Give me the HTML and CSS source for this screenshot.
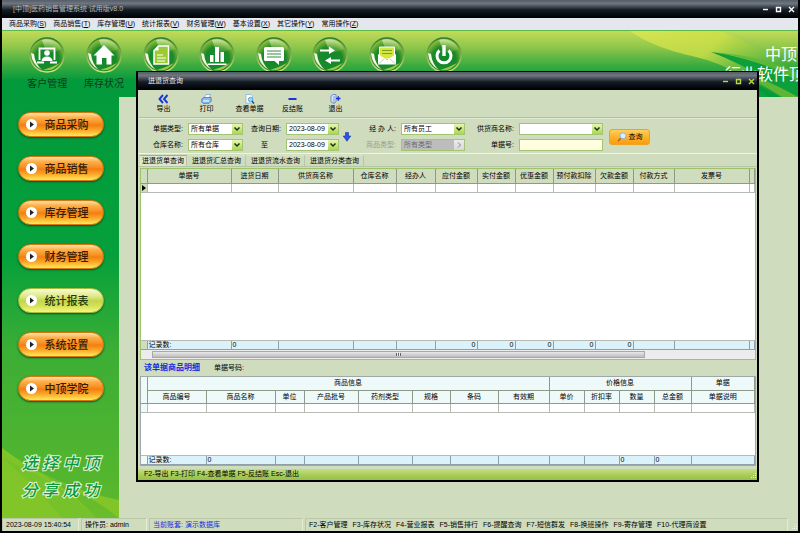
FILE: index.html
```
<!DOCTYPE html>
<html lang="zh-CN">
<head>
    <meta charset="UTF-8">
    <meta name="viewport" content="width=device-width, initial-scale=1.0">
    <title>[中顶]医药销售管理系统 试用版v8.0</title>
    <link rel="stylesheet" href="styles.css">
</head>
<body>

<!-- Shared icon parts -->
<svg class="defs" width="0" height="0" aria-hidden="true">
    <defs>
        <radialGradient id="orbFill" cx="50%" cy="62%" r="60%">
            <stop offset="0" stop-color="#0f8a2c"/>
            <stop offset="0.6" stop-color="#1c8a2a"/>
            <stop offset="1" stop-color="#9cc63a"/>
        </radialGradient>
        <linearGradient id="orbRim" x1="0" y1="0" x2="0" y2="1">
            <stop offset="0" stop-color="#2c7a35"/>
            <stop offset="1" stop-color="#d6e07a"/>
        </linearGradient>
        <linearGradient id="orbShine" x1="0" y1="0" x2="0" y2="1">
            <stop offset="0" stop-color="#f4f8dc"/>
            <stop offset="1" stop-color="#b6d83a" stop-opacity="0.3"/>
        </linearGradient>
        <linearGradient id="ray" x1="0" y1="0" x2="1" y2="0.4">
            <stop offset="0" stop-color="#dfe850" stop-opacity="0.7"/>
            <stop offset="0.5" stop-color="#cfe048" stop-opacity="0.8"/>
            <stop offset="1" stop-color="#4fb23a" stop-opacity="0.3"/>
        </linearGradient>
        <symbol id="orb" viewBox="0 0 36 36">
            <circle cx="18" cy="18" r="17" fill="url(#orbFill)" stroke="url(#orbRim)" stroke-width="1.4"/>
            <path d="M13 3 A15.500 15.500 0 0 1 32 12 Q24 17 17 14 Z" fill="url(#orbShine)" opacity="0.65"/>
            <path d="M2 16 Q3 28 13 33 Q6 27 5 17 Z" fill="#f2f7e6"/>
            <path d="M14 33 Q24 35 31 26 Q24 30 14 33 Z" fill="#b9d84a" opacity="0.8"/>
        </symbol>
    </defs>
</svg>

<div class="app">
    <header class="titlebar">
        <h1>[中顶]医药销售管理系统 试用版v8.0</h1>
        <div class="win-controls">
            <button type="button" aria-label="最小化"><svg viewBox="0 0 7 7"><path d="M1 3.500H6"/></svg></button>
            <button type="button" aria-label="最大化"><svg viewBox="0 0 7 7"><path d="M1.500 1.500H5.500V5.500H1.500Z"/></svg></button>
            <button type="button" aria-label="关闭"><svg viewBox="0 0 7 7"><path d="M1 1L6 6M6 1L1 6"/></svg></button>
        </div>
    </header>

    <nav class="menubar">
        <a href="#">商品采购(<u>S</u>)</a>
        <a href="#">商品销售(<u>T</u>)</a>
        <a href="#">库存管理(<u>U</u>)</a>
        <a href="#">统计报表(<u>V</u>)</a>
        <a href="#">财务管理(<u>W</u>)</a>
        <a href="#">基本设置(<u>X</u>)</a>
        <a href="#">其它操作(<u>Y</u>)</a>
        <a href="#">常用操作(<u>Z</u>)</a>
    </nav>

    <div class="banner">
        <svg class="swoosh" viewBox="0 0 168 66" preserveAspectRatio="none" aria-hidden="true">
            <path d="M0 0Q22 16 62 25Q90 31 118 48L150 66H168V44Q140 20 90 0Z" fill="url(#ray)"/>
            <path d="M81 21Q110 24 168 46V66H158Q130 40 81 21Z" fill="#0d9f3a"/>
            <path d="M81 21Q125 26 168 50V42Q130 24 81 21Z" fill="#5cb83a" opacity="0.8"/>
            <path d="M96 38Q130 44 168 66H152Q125 48 96 38Z" fill="#5fb636"/>
            <path d="M104 46Q126 54 138 66H100Z" fill="#0d9f3a"/>
        </svg>
        <div class="launchers">
            <button type="button" class="launcher">
                <svg viewBox="0 0 36 36"><use href="#orb"/><path d="M10.500 23V11.500H25.500V23M8 25.500H15M21 25.500H28" fill="none" stroke="#fff" stroke-width="1.800"/><circle cx="18" cy="16" r="2.800" fill="#fff"/><path d="M12.500 24Q13 19.500 18 19.500T23.500 24Z" fill="#fff"/></svg>
                <span>客户管理</span>
            </button>
            <button type="button" class="launcher">
                <svg viewBox="0 0 36 36"><use href="#orb"/><path d="M18 8L28.500 18.500H25.500V27.500H20.500V21H16V27.500H10.500V18.500H7.500Z" fill="#fff"/></svg>
                <span>库存状况</span>
            </button>
            <button type="button" class="launcher" aria-label="统计">
                <svg viewBox="0 0 36 36"><use href="#orb"/><path d="M15.500 9H25.500V27H11V13.500Z" fill="#9ccb34" stroke="#fff" stroke-width="1.500"/><path d="M11 13.500H15.500V9" fill="#fff"/><path d="M14 18H20M14 21H23M14 24H22" stroke="#fff" stroke-width="1.200"/></svg>
            </button>
            <button type="button" class="launcher" aria-label="报表">
                <svg viewBox="0 0 36 36"><use href="#orb"/><path d="M11 18H14.500V25H11ZM16 10H20V25H16ZM21.500 15H25V25H21.500ZM8.500 26.500H27.500V28H8.500Z" fill="#fff"/></svg>
            </button>
            <button type="button" class="launcher" aria-label="短信">
                <svg viewBox="0 0 36 36"><use href="#orb"/><path d="M9.500 10H26.500Q28 10 28 11.500V22.500Q28 24 26.500 24H23V28L18.500 24H9.500Q8 24 8 22.500V11.500Q8 10 9.500 10Z" fill="#fff"/><path d="M11 14H25M11 17H25M11 20H25" stroke="#2f8f3c" stroke-width="1.200"/></svg>
            </button>
            <button type="button" class="launcher" aria-label="换班">
                <svg viewBox="0 0 36 36"><use href="#orb"/><path d="M8 12.500H17V9.500L23 13.500L17 17V14.500H8ZM28 22.500H19V20L13 23.500L19 27V24.500H28Z" fill="#fff"/></svg>
            </button>
            <button type="button" class="launcher" aria-label="邮件">
                <svg viewBox="0 0 36 36"><use href="#orb"/><path d="M10.500 10H25.500V22H10.500Z" fill="#d8e53a" stroke="#fff"/><path d="M13 13.500H23M13 16.500H23" stroke="#6ba52e"/><path d="M9 17L18 23L27 17V27.500H9Z" fill="#fff"/><path d="M9 27.500L15.500 21.500M27 27.500L20.500 21.500" stroke="#a9c9a0" stroke-width="0.800"/></svg>
            </button>
            <button type="button" class="launcher" aria-label="退出">
                <svg viewBox="0 0 36 36"><use href="#orb"/><path d="M13.500 13.500A7 7 0 1 0 22.500 13.500" fill="none" stroke="#fff" stroke-width="3"/><path d="M18 8V19" stroke="#fff" stroke-width="3.400"/></svg>
            </button>
        </div>
        <p class="brand"><span>中顶</span><span>行业软件顶</span></p>
    </div>

    <main class="workspace">
        <aside class="sidebar">
            <button type="button" class="pill">商品采购</button>
            <button type="button" class="pill">商品销售</button>
            <button type="button" class="pill">库存管理</button>
            <button type="button" class="pill">财务管理</button>
            <button type="button" class="pill active">统计报表</button>
            <button type="button" class="pill">系统设置</button>
            <button type="button" class="pill">中顶学院</button>
            <p class="slogan">选 择 中 顶<br>分 享 成 功</p>
        </aside>
    </main>

    <footer class="statusbar">
        <span class="cell clock">2023-08-09 15:40:54</span>
        <span class="cell operator">操作员: admin</span>
        <span class="cell account">当前账套: 演示数据库</span>
        <span class="cell keys">
            <span>F2-客户管理</span><span>F3-库存状况</span><span>F4-营业报表</span><span>F5-销售排行</span><span>F6-提醒查询</span><span>F7-短信群发</span><span>F8-换班操作</span><span>F9-寄存管理</span><span>F10-代理商设置</span>
        </span>
        <svg class="grip" viewBox="0 0 8 8"><path d="M6 1h1v1h-1zM4 3h1v1h-1zM6 3h1v1h-1zM2 5h1v1h-1zM4 5h1v1h-1zM6 5h1v1h-1z"/></svg>
    </footer>

    <!-- 进退货查询 window -->
    <section class="dialog">
        <header class="titlebar">
            <h2>进退货查询</h2>
            <div class="win-controls">
                <button type="button" aria-label="最小化"><svg viewBox="0 0 7 7"><path d="M1 3.500H6"/></svg></button>
                <button type="button" aria-label="最大化"><svg viewBox="0 0 7 7"><path d="M1.500 1.500H5.500V5.500H1.500Z"/></svg></button>
                <button type="button" aria-label="关闭"><svg viewBox="0 0 7 7"><path d="M1 1L6 6M6 1L1 6"/></svg></button>
            </div>
        </header>

        <div class="toolbar">
            <button type="button">
                <svg viewBox="0 0 11 10"><path d="M5 1L1.500 5L5 9M9.500 1L6 5L9.500 9" fill="none" stroke="#1b35d8" stroke-width="1.900"/></svg>
                导出
            </button>
            <button type="button">
                <svg viewBox="0 0 11 10"><path d="M3 4L5 0.500H9.500L8 4.500Z" fill="#fff" stroke="#5b8fd0" stroke-width="0.600"/><path d="M0.800 5L3 3.500H10L10.300 7L8 9.300H2L0.800 8Z" fill="#8dbdf0" stroke="#2f64b8" stroke-width="0.700"/><path d="M2 7H8" stroke="#fff"/></svg>
                打印
            </button>
            <button type="button">
                <svg viewBox="0 0 11 10"><path d="M2 0.500H7L8.500 2V9H2Z" fill="#fff" stroke="#7aa9d8" stroke-width="0.700"/><circle cx="6.500" cy="5.500" r="2.200" fill="#8fe0f0" stroke="#3b87c0" stroke-width="0.700"/><path d="M8 7.200L10 9.500" stroke="#1f3f90" stroke-width="1.300"/></svg>
                查看单据
            </button>
            <button type="button">
                <svg viewBox="0 0 11 10"><path d="M1.500 4H9.500V6H1.500Z" fill="#1b35d8"/></svg>
                反结账
            </button>
            <button type="button">
                <svg viewBox="0 0 11 10"><path d="M1 2L3 0.500H6V8L4 9.500L1 8Z" fill="#d5e4fa" stroke="#5c80c4" stroke-width="0.800"/><path d="M4 2V9" stroke="#5c80c4" stroke-width="0.700"/><path d="M6 4.500H10.500M8.300 2.300V6.700" stroke="#1b35d8" stroke-width="1.500"/></svg>
                退出
            </button>
        </div>

        <form class="filters">
            <label for="billType">单据类型:</label>
            <select id="billType"><option>所有单据</option></select>
            <label for="dateFrom">查询日期:</label>
            <select id="dateFrom"><option>2023-08-09</option></select>
            <svg class="down" viewBox="0 0 8 10"><path d="M2.500 0.500H5.500V4H7.800L4 9.300L0.200 4H2.500Z" fill="#2a55e0" stroke="#1633a0" stroke-width="0.600"/></svg>
            <label for="handler">经 办 人:</label>
            <select id="handler"><option>所有员工</option></select>
            <label for="supplier">供货商名称:</label>
            <select id="supplier"><option></option></select>
            <button type="button" class="search">
                <svg viewBox="0 0 10 10"><path d="M4 6L1 9.300" stroke="#b5651d" stroke-width="1.600"/><circle cx="6" cy="3.800" r="3" fill="#d6f1ff" stroke="#7db4dc" stroke-width="0.900"/></svg>
                查询
            </button>
            <label for="store">仓库名称:</label>
            <select id="store"><option>所有仓库</option></select>
            <label for="dateTo" class="to">至</label>
            <select id="dateTo"><option>2023-08-09</option></select>
            <label for="goodsType" class="off">商品类型:</label>
            <select id="goodsType" disabled><option>所有类型</option></select>
            <label for="billNo">单据号:</label>
            <input type="text" id="billNo">
        </form>

        <div class="tabs">
            <button type="button" class="active">进退货单查询</button>
            <button type="button">进退货汇总查询</button>
            <button type="button">进退货流水查询</button>
            <button type="button">进退货分类查询</button>
        </div>

        <div class="panel">
            <div class="grid-box bills">
                <table>
                    <colgroup>
                        <col class="mark"><col class="b-no"><col class="b-date"><col class="b-supplier"><col class="b-store"><col class="b-person"><col class="b-due"><col class="b-money"><col class="b-money"><col class="b-due"><col class="b-money"><col class="b-pay"><col class="b-invoice"><col>
                    </colgroup>
                    <thead>
                        <tr><th></th><th>单据号</th><th>进货日期</th><th>供货商名称</th><th>仓库名称</th><th>经办人</th><th>应付金额</th><th>实付金额</th><th>优惠金额</th><th>预付款扣除</th><th>欠款金额</th><th>付款方式</th><th>发票号</th><th></th></tr>
                    </thead>
                    <tbody>
                        <tr class="line"><th><span class="pointer"></span></th><td></td><td></td><td></td><td></td><td></td><td></td><td></td><td></td><td></td><td></td><td></td><td></td><td></td></tr>
                        <tr class="blank"><td colspan="14"></td></tr>
                    </tbody>
                    <tfoot>
                        <tr><th></th><td>记录数:</td><td>0</td><td></td><td></td><td></td><td class="num">0</td><td class="num">0</td><td class="num">0</td><td class="num">0</td><td class="num">0</td><td></td><td></td><td></td></tr>
                    </tfoot>
                </table>
                <div class="scroll"><div class="thumb"></div></div>
            </div>

            <p class="caption"><strong>该单据商品明细</strong><span>单据号码:</span></p>

            <div class="grid-box detail">
                <table>
                    <colgroup>
                        <col class="mark"><col class="d-code"><col class="d-name"><col class="d-unit"><col class="d-batch"><col class="d-batch"><col class="d-spec"><col class="d-bar"><col class="d-expiry"><col class="d-price"><col class="d-price"><col class="d-price"><col class="d-total"><col>
                    </colgroup>
                    <thead>
                        <tr><th rowspan="2"></th><th colspan="8">商品信息</th><th colspan="4">价格信息</th><th>单据</th></tr>
                        <tr><th>商品编号</th><th>商品名称</th><th>单位</th><th>产品批号</th><th>药剂类型</th><th>规格</th><th>条码</th><th>有效期</th><th>单价</th><th>折扣率</th><th>数量</th><th>总金额</th><th>单据说明</th></tr>
                    </thead>
                    <tbody>
                        <tr class="line"><th></th><td></td><td></td><td></td><td></td><td></td><td></td><td></td><td></td><td></td><td></td><td></td><td></td><td></td></tr>
                        <tr class="blank"><td colspan="14"></td></tr>
                    </tbody>
                    <tfoot>
                        <tr><th></th><td>记录数:</td><td>0</td><td></td><td></td><td></td><td></td><td></td><td></td><td></td><td></td><td>0</td><td>0</td><td></td></tr>
                    </tfoot>
                </table>
            </div>
        </div>

        <footer class="hints">
            <span>F2-导出</span><span>F3-打印</span><span>F4-查看单据</span><span>F5-反结账</span><span>Esc-退出</span>
            <svg class="grip" viewBox="0 0 8 8"><path d="M6 1h1v1h-1zM4 3h1v1h-1zM6 3h1v1h-1zM2 5h1v1h-1zM4 5h1v1h-1zM6 5h1v1h-1z"/></svg>
        </footer>
    </section>
</div>

</body>
</html>
```

FILE: styles.css
```
* {
    box-sizing: border-box;
}
body {
    margin: 0;
    font-family: "Liberation Sans", "Noto Sans CJK SC", sans-serif;
    font-size: 7px;
    line-height: 10px;
    color: #000;
    background-color: #000;
}
button, select, input {
    font: inherit;
    color: inherit;
    margin: 0;
    padding: 0;
    border: none;
    background: none;
}
h1, h2, p {
    margin: 0;
    font-size: 7px;
    font-weight: normal;
}
a {
    color: inherit;
    text-decoration: none;
}
.defs {
    position: absolute;
}

/* Main window */
.app {
    position: relative;
    display: flex;
    flex-direction: column;
    height: 100vh;
    min-height: 500px;
    padding: 0 2px 2px;
    overflow: hidden;
    background-color: #000;
}
.titlebar {
    display: flex;
    flex: none;
    align-items: center;
    justify-content: space-between;
    height: 18px;
    padding: 0 3px 0 11px;
    color: #b4b8bc;
    background: linear-gradient(#555d68 0, #70767f 20%, #30363e 45%, #131c26 55%, #05080b 85%, #000);
}
.win-controls {
    display: flex;
    gap: 6px;
    color: #fff;
}
.win-controls button {
    width: 7px;
    height: 7px;
}
.win-controls svg {
    display: block;
    fill: none;
    stroke: currentColor;
    stroke-width: 1.4;
}
.menubar {
    display: flex;
    flex: none;
    gap: 7px;
    height: 13px;
    padding: 1px 7px;
    background-color: #e4e8ee;
    border-bottom: 1px solid #5cba4a;
}

/* Green banner */
.banner {
    position: relative;
    display: flex;
    flex: none;
    justify-content: space-between;
    height: 66px;
    overflow: hidden;
    background: linear-gradient(#c2db58, #8ec64a 25%, #3cab40 52%, #039a3b 75%);
}
.swoosh {
    position: absolute;
    top: 0;
    right: 0;
    width: 168px;
    height: 100%;
}
.launchers {
    display: flex;
    width: 470px;
    padding: 6px 0 0 17px;
}
.launcher {
    display: flex;
    flex: 1;
    flex-direction: column;
    align-items: center;
    gap: 5px;
    font-size: 10px;
    line-height: 12px;
    color: #0c3a18;
}
.launcher svg {
    width: 36px;
    height: 36px;
}
.brand {
    position: relative;
    display: flex;
    flex-direction: column;
    width: 73px;
    padding-top: 14px;
    font-size: 16px;
    line-height: 20px;
    white-space: nowrap;
    color: #fff;
}
.brand span:first-child {
    padding-left: 40px;
}

/* Sidebar */
.workspace {
    display: flex;
    flex: 1;
    min-height: 0;
    background-color: #cfdcbd;
}
.sidebar {
    display: flex;
    flex-direction: column;
    align-items: center;
    gap: 19px;
    width: 117px;
    padding-top: 15px;
    overflow: hidden;
    background:
        url("data:image/svg+xml,%3Csvg xmlns='http://www.w3.org/2000/svg' viewBox='0 0 117 70' preserveAspectRatio='none'%3E%3Cpath d='M0 0Q50 38 117 52V70H0Z' fill='%238fca28' fill-opacity='0.75'/%3E%3Cpath d='M0 10Q60 36 95 70H60Q30 34 0 10Z' fill='%2370c02c' fill-opacity='0.7'/%3E%3Cpath d='M40 26Q90 48 117 70H95Q70 44 40 26Z' fill='%2359b52e' fill-opacity='0.6'/%3E%3C/svg%3E") bottom / 100% 70px no-repeat,
        linear-gradient(#039a3b, #05a03b 38%, #3bae35 60%, #5cb82c);
}
.pill {
    display: flex;
    flex: none;
    align-items: center;
    gap: 8px;
    width: 86px;
    height: 25px;
    padding-left: 7px;
    font-size: 11px;
    font-weight: 500;
    color: #3a1c02;
    border-radius: 13px;
    border: 1px solid #d9760c;
    background: linear-gradient(#ffe3a8, #fdb04a 20%, #f68a1c 48%, #f57c10 52%, #fba928 75%, #ffe95a);
    box-shadow: 0 1px 2px #06501c;
}
.pill.active {
    color: #24360a;
    border-color: #a9bd3a;
    background: linear-gradient(#f8fbd6, #e0ea8c 30%, #c3d64c 52%, #d6e25a 75%, #f6f77c);
}
.pill::before {
    content: "";
    width: 11px;
    height: 11px;
    border-radius: 50%;
    background: #fff url("data:image/svg+xml,%3Csvg xmlns='http://www.w3.org/2000/svg' viewBox='0 0 11 11'%3E%3Cpath d='M4 2.500L8 5.500L4 8.500Z' fill='%23222'/%3E%3C/svg%3E") center / 11px 11px;
}
.slogan {
    margin-top: 30px;
    font-size: 16px;
    font-style: italic;
    font-weight: 500;
    line-height: 27px;
    white-space: nowrap;
    color: #0a9a3c;
    -webkit-text-stroke: 2px #e6f5d8;
    paint-order: stroke fill;
}

/* Status bar */
.statusbar {
    display: flex;
    flex: none;
    gap: 2px;
    height: 13px;
    white-space: nowrap;
    background-color: #cfdcbd;
}
.statusbar .cell {
    padding: 1px 3px;
    border: 1px solid #b9c6a8;
    border-right-color: #e3ecd6;
    border-bottom: none;
}
.clock {
    width: 77px;
}
.operator {
    width: 66px;
}
.account {
    width: 154px;
    color: #1a2fe0;
}
.statusbar .keys {
    display: flex;
    flex: 1;
    gap: 5px;
}
.grip {
    align-self: flex-end;
    width: 8px;
    height: 8px;
    margin-left: auto;
    fill: #eef4e2;
}

/* Query window, floats over the workspace */
.dialog {
    position: absolute;
    top: 71px;
    right: 41px;
    bottom: 51px;
    left: 136px;
    display: flex;
    flex-direction: column;
    border: solid #000;
    border-width: 1px 2px 2px;
    background-color: #cfdcbd;
}
.dialog .titlebar {
    padding: 0 2px 0 10px;
    color: #e8eaec;
}
.dialog .win-controls {
    color: #b5dc3c;
}
.toolbar {
    display: flex;
    flex: none;
    height: 28px;
    padding: 4px 0 0 4px;
    border-bottom: 1px solid #b3bfa3;
}
.toolbar button {
    display: flex;
    flex-direction: column;
    align-items: center;
    width: 43px;
    height: 21px;
}
.toolbar svg {
    flex: none;
    width: 11px;
    height: 10px;
}
.filters {
    display: grid;
    flex: none;
    grid-template-columns: 36px 55px 39px 53px 12px 44px 64px 50px 84px 45px;
    grid-template-rows: 12px 12px;
    gap: 4px 2px;
    height: 36px;
    padding: 4px 0 0 12px;
    line-height: 12px;
    border-top: 1px solid #e2ebd4;
    border-bottom: 1px solid #eff5e6;
}
.filters label {
    padding-right: 3px;
    text-align: right;
    white-space: nowrap;
}
.filters label.to {
    padding: 0;
    text-align: center;
}
.filters label.off {
    color: #98a18c;
}
.filters select, .filters input {
    width: 100%;
    height: 12px;
    padding-left: 2px;
    line-height: 10px;
    border: 1px solid #a3c573;
    background-color: #fff;
}
.filters select {
    appearance: none;
    background-image:
        url("data:image/svg+xml,%3Csvg xmlns='http://www.w3.org/2000/svg' viewBox='0 0 10 10'%3E%3Cpath d='M2.500 3.500L5 6L7.500 3.500' fill='none' stroke='%23203010' stroke-width='1.500'/%3E%3C/svg%3E"),
        linear-gradient(#e6f5b4, #a9d84e);
    background-repeat: no-repeat;
    background-position: right center;
    background-size: 10px 10px;
}
.filters select:disabled {
    opacity: 1;
    color: #6b6b6b;
    background-color: #bdbdbd;
    background-image:
        url("data:image/svg+xml,%3Csvg xmlns='http://www.w3.org/2000/svg' viewBox='0 0 10 10'%3E%3Cpath d='M4 2.500L6.500 5L4 7.500' fill='none' stroke='%23888'/%3E%3C/svg%3E"),
        linear-gradient(#ececec, #d8d8d8);
}
.filters input {
    background-color: #ffffe0;
}
.down {
    grid-row: 1 / 3;
    grid-column: 5;
    place-self: center;
    width: 8px;
    height: 10px;
}
.search {
    display: flex;
    grid-row: 1 / 3;
    grid-column: 10;
    align-items: center;
    align-self: center;
    justify-content: center;
    gap: 2px;
    height: 16px;
    margin-left: 4px;
    border: 1px solid #eea320;
    border-radius: 3px;
    background: linear-gradient(#ffcf5c, #fdb22c 50%, #fb9c10);
}
.search svg {
    width: 10px;
    height: 10px;
}

/* Tabs and grids */
.tabs {
    display: flex;
    flex: none;
    gap: 1px;
    padding: 1px 2px 0;
    border-bottom: 1px solid #b7c4a6;
}
.tabs button {
    padding: 0 4px;
    border-top: 1px solid #d9e4ca;
    border-right: 1px solid #b7c4a6;
}
.tabs button.active {
    padding: 0 2px;
    border-top-color: #f29a2e;
    background-color: #dde7cf;
}
.panel {
    display: flex;
    flex: 1;
    flex-direction: column;
    min-height: 0;
    padding: 1px 1px 3px 2px;
}
.grid-box {
    display: flex;
    flex-direction: column;
    min-height: 0;
    background-color: #fff;
    border: 1px solid #9cc46a;
}
.bills {
    flex: 1;
}
.detail {
    flex: none;
    height: 90px;
    border-color: #9fa8a8;
}
table {
    flex: 1;
    width: 100%;
    height: 100%;
    table-layout: fixed;
    border-collapse: collapse;
}
.bills table {
    height: calc(100% - 9px);
}
th, td {
    padding: 0 1px;
    font-weight: normal;
    line-height: 8px;
    white-space: nowrap;
    border: 1px solid #b4bab4;
    border-width: 0 1px 1px 0;
}
thead th {
    height: 14px;
    text-align: center;
    background-color: #cfdcbd;
    border-color: #8f998a;
}
.detail thead th {
    height: 13px;
    background-color: #eefafa;
}
.line td, .line th {
    height: 9px;
}
.bills th {
    background-color: #cfdcbd;
}
.detail th {
    background-color: #eefafa;
}
.blank td {
    border-right: none;
}
tfoot td, tfoot th {
    height: 9px;
    border-color: #8fa0a8;
}
tfoot td {
    background-color: #dcf2fb;
}
tfoot .num {
    text-align: right;
}
.pointer {
    display: block;
    width: 0;
    border: solid transparent;
    border-width: 3px 0 3px 4px;
    border-left-color: #000;
}
.scroll {
    flex: none;
    height: 9px;
    padding: 1px 110px 1px 11px;
    background-color: #ececec;
}
.thumb {
    height: 7px;
    border: 1px solid #a8a8a8;
    background:
        repeating-linear-gradient(90deg, #666 0 1px, #eee 1px 2px) center / 5px 3px no-repeat,
        linear-gradient(#e8e8e8, #bcbcbc);
}
.mark { width: 6px; }
.b-no { width: 84px; }
.b-date { width: 47px; }
.b-supplier { width: 75px; }
.b-store { width: 43px; }
.b-person { width: 39px; }
.b-due { width: 42px; }
.b-money { width: 38px; }
.b-pay { width: 41px; }
.b-invoice { width: 75px; }
.d-code { width: 59px; }
.d-name { width: 69px; }
.d-unit { width: 29px; }
.d-batch { width: 54px; }
.d-spec { width: 38px; }
.d-bar { width: 48px; }
.d-expiry { width: 51px; }
.d-price { width: 35px; }
.d-total { width: 37px; }

.caption {
    display: flex;
    flex: none;
    gap: 14px;
    padding: 3px 4px;
}
.caption strong {
    font-size: 8px;
    color: #1a2fe0;
}
.hints {
    display: flex;
    flex: none;
    gap: 2px;
    height: 11px;
    padding-left: 6px;
    white-space: nowrap;
    background: linear-gradient(#c4e07e, #a6cb58 60%, #98c048);
}
```
